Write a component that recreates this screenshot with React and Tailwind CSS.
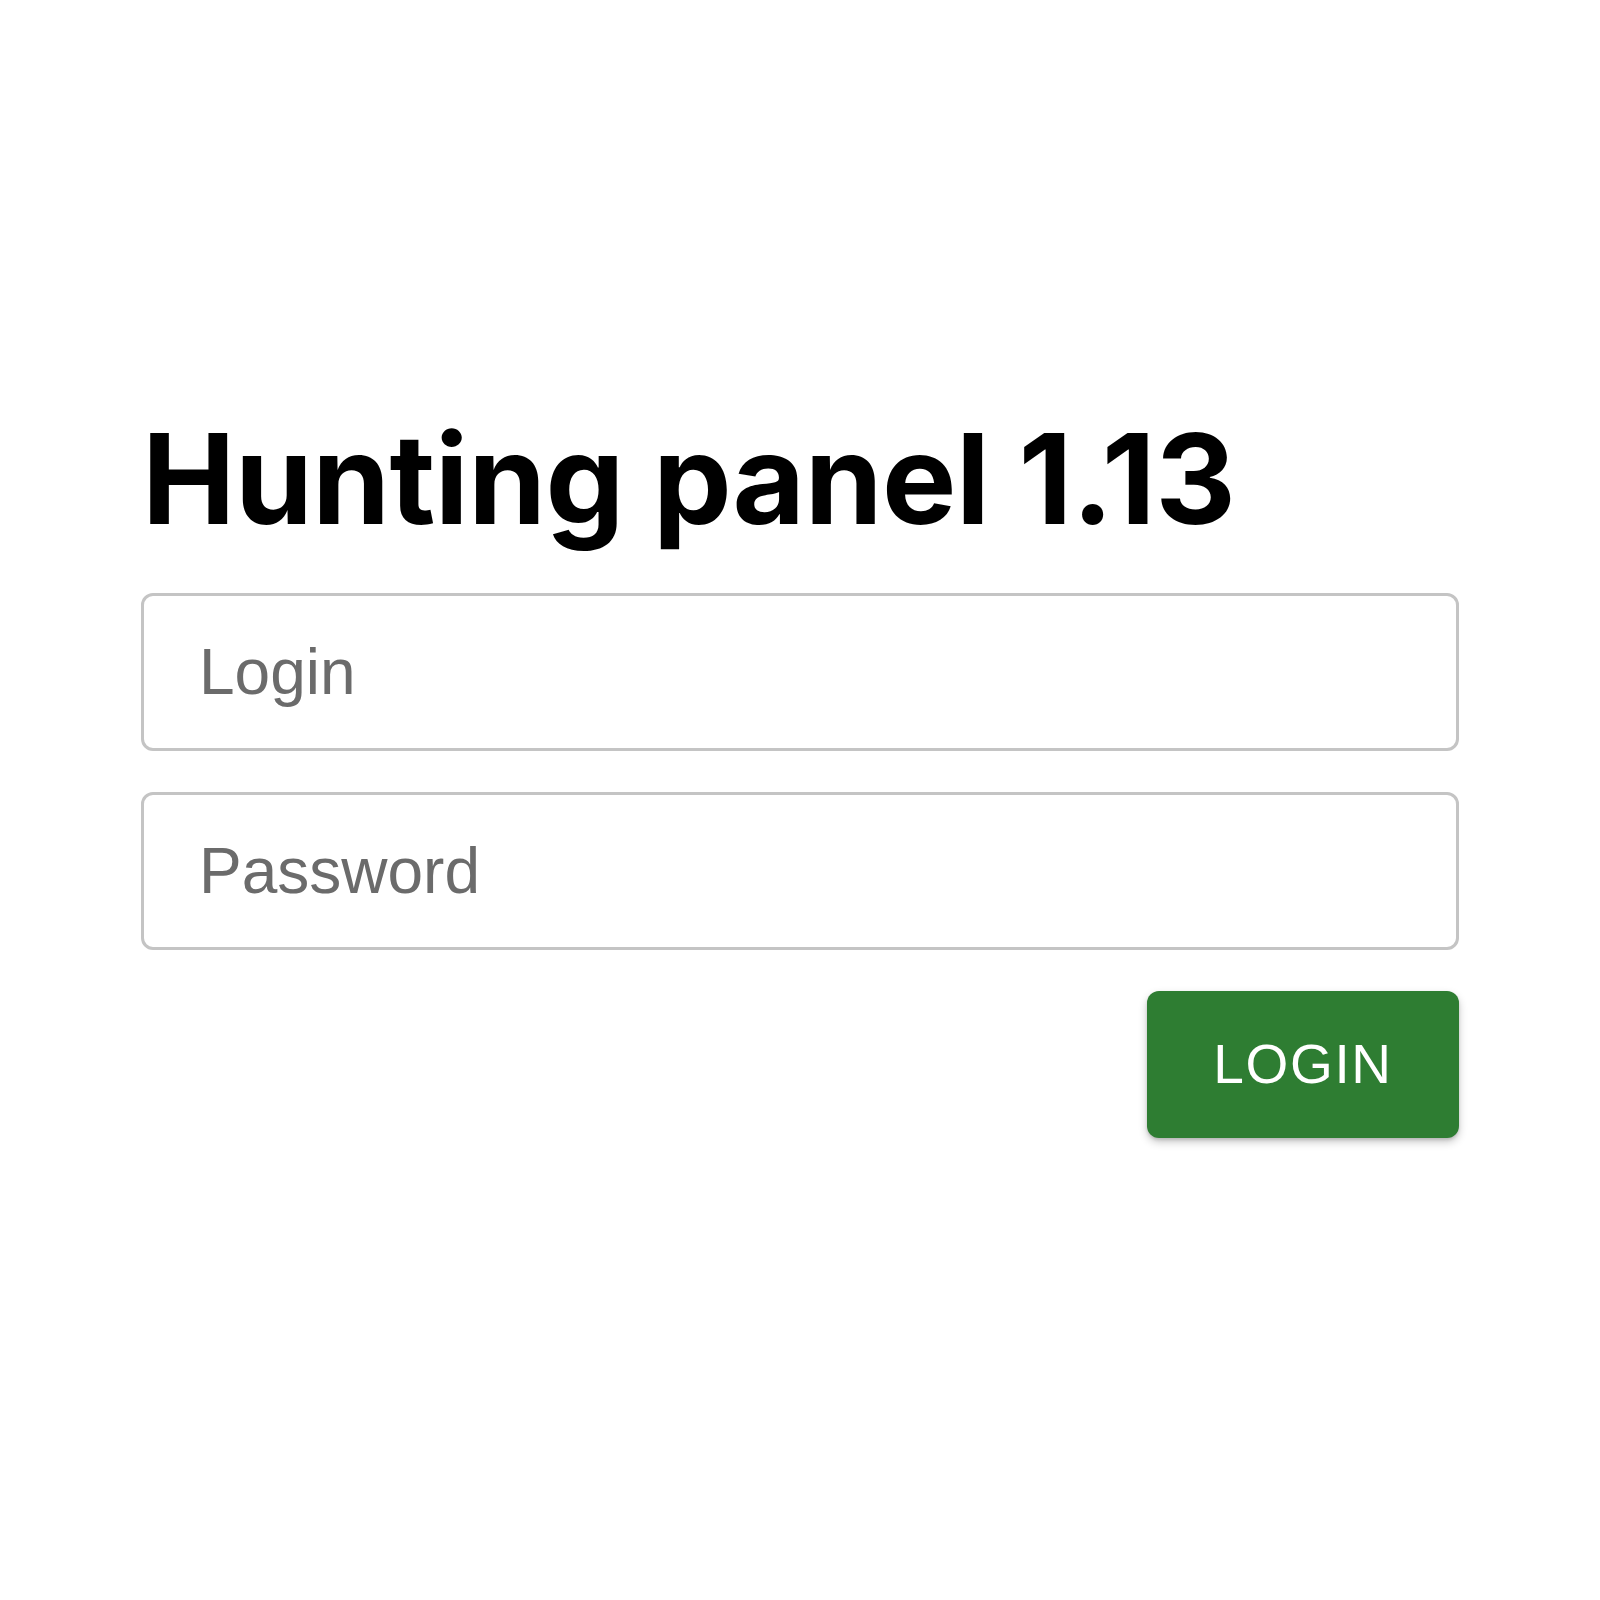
export default function App() {
  return (
    <div className="min-h-[1600px] w-full bg-white flex justify-center">
      <div className="w-[1318px] pt-[416px] flex flex-col">
        <h1 className="text-[125px] leading-none font-bold text-black tracking-[-0.004em] pl-[1px]" style={{ fontFamily: 'Inter, "Noto Sans", sans-serif' }}>
          Hunting panel 1.13
        </h1>

        <form className="mt-[52px] flex flex-col gap-[41px]" style={{ fontFamily: '"Liberation Sans", Arial, sans-serif' }}>
          <input
            type="text"
            placeholder="Login"
            className="h-[158px] w-full rounded-[12px] border-[3px] border-[#c4c4c4] bg-white pl-[55px] pr-6 text-[64px] text-black placeholder:text-[#6b6b6b] outline-none"
          />
          <input
            type="password"
            placeholder="Password"
            className="h-[158px] w-full rounded-[12px] border-[3px] border-[#c4c4c4] bg-white pl-[55px] pr-6 text-[64px] text-black placeholder:text-[#6b6b6b] outline-none"
          />
        </form>

        <button
          type="button"
          className="mt-[41px] self-end w-[312px] h-[147px] rounded-[12px] bg-[#2e7d32] text-white text-[55px] tracking-[0.03em] shadow-[0_4px_8px_rgba(0,0,0,0.22),0_2px_3px_rgba(0,0,0,0.12)]"
          style={{ fontFamily: '"Liberation Sans", Arial, sans-serif' }}
        >
          LOGIN
        </button>
      </div>
    </div>
  );
}
